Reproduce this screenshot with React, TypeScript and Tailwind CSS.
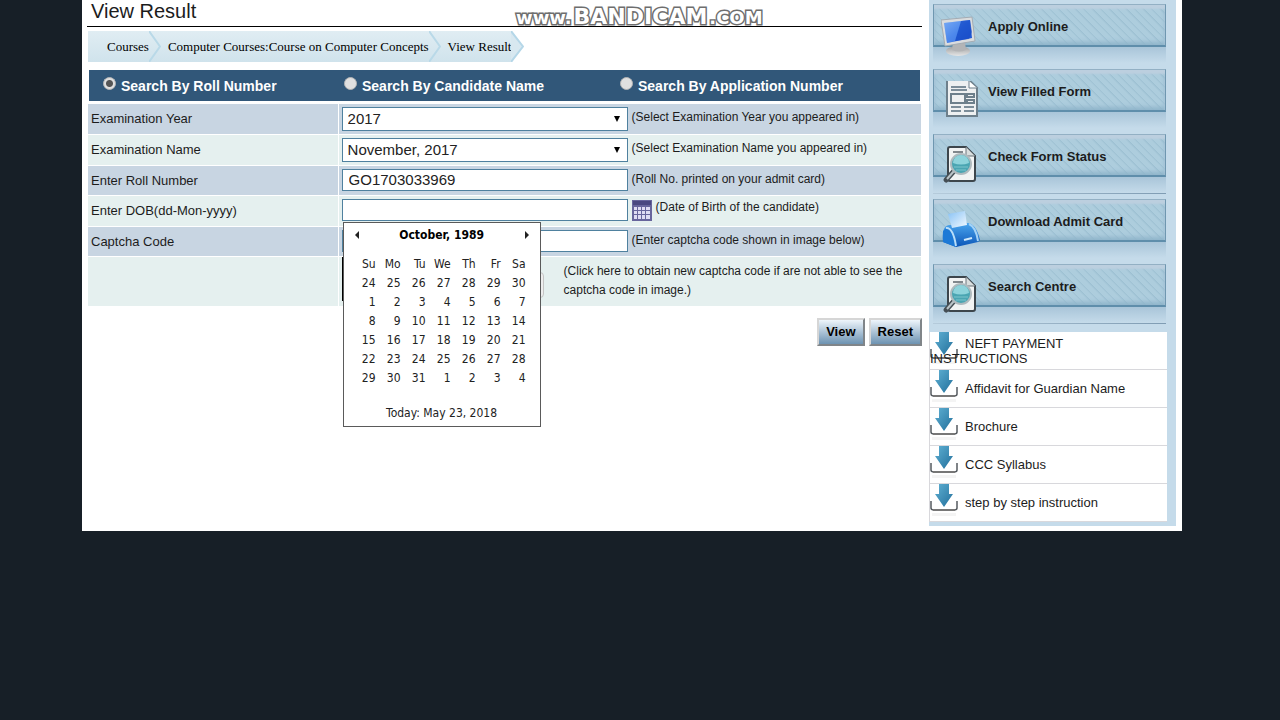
import { useState } from "react";
import type { ReactNode } from "react";

const DAYS = ["Su", "Mo", "Tu", "We", "Th", "Fr", "Sa"];

const WEEKS = [
  [24, 25, 26, 27, 28, 29, 30],
  [1, 2, 3, 4, 5, 6, 7],
  [8, 9, 10, 11, 12, 13, 14],
  [15, 16, 17, 18, 19, 20, 21],
  [22, 23, 24, 25, 26, 27, 28],
  [29, 30, 31, 1, 2, 3, 4],
];

const MODES = [
  "Search By Roll Number",
  "Search By Candidate Name",
  "Search By Application Number",
];

const DOWNLOADS = [
  "NEFT PAYMENT INSTRUCTIONS",
  "Affidavit for Guardian Name",
  "Brochure",
  "CCC Syllabus",
  "step by step instruction",
];

const fieldStyle =
  "w-[286px] shrink-0 border border-[#4f819f] bg-white text-[15px] text-[#222]";

const buttonStyle =
  "h-7 border-2 border-b-[#808589] border-l-[#d6d6d6] border-r-[#808589] border-t-[#d6d6d6] bg-linear-to-b from-[#eef5fb] to-[#6d93b2] px-[7px]";

const monitorIcon = (
  <svg viewBox="0 0 40 42" className="h-[42px] w-10">
    <defs>
      <linearGradient id="screen" x1="0" y1="0" x2="1" y2="1">
        <stop offset="0" stopColor="#6ea4f4" />
        <stop offset="0.5" stopColor="#2c6ee6" />
        <stop offset="1" stopColor="#1b50cf" />
      </linearGradient>
      <linearGradient id="stand" x1="0" y1="0" x2="0" y2="1">
        <stop offset="0" stopColor="#9b9c9e" />
        <stop offset="1" stopColor="#e6e6e6" />
      </linearGradient>
    </defs>
    <ellipse cx="17" cy="35" rx="12" ry="5" fill="url(#stand)" />
    <path d="M12 27 L24 26 L25 34 Q18 37 11 34Z" fill="#b3b4b6" />
    <path d="M0 4 L31 1 L34 25 L4 30Z" fill="#dadcde" stroke="#a4acb3" />
    <path d="M3 7 L29 4 L31 22 L6 27Z" fill="url(#screen)" />
    <path d="M20 5 L29 4 L31 16 L28 23 L14 25Z" fill="#1747c2" opacity="0.6" />
    <path d="M3 7 L20 5 L14 25 L6 27Z" fill="#8ab8f7" opacity="0.35" />
  </svg>
);

const formIcon = (
  <svg viewBox="0 0 40 42" className="h-[42px] w-10" fill="none">
    <path
      d="M6 -1 H28 L36 7 V35 H6Z"
      fill="#eef0f1"
      stroke="#6d7f8b"
      strokeWidth="2"
    />
    <path d="M28 0 V7 H36" fill="#fff" stroke="#6d7f8b" />
    <path
      d="M10 6 H25 M10 9 H26 M10 26 H20 M10 30 H20 M23 26 H33 M23 30 H33"
      stroke="#7c8d99"
      strokeWidth="2"
    />
    <path
      d="M10 13 H24 V22 H10Z M26 13 H33 V16 H26Z M26 19 H33 V22 H26Z"
      stroke="#6d7f8b"
      strokeWidth="2"
    />
  </svg>
);

const searchIcon = (
  <svg viewBox="0 0 40 42" className="h-[42px] w-10" fill="none">
    <path
      d="M9 1 H25 L34 10 V33 Q34 35 32 35 H9 Q7 35 7 33 V3 Q7 1 9 1Z"
      fill="#f1f3f3"
      stroke="#3d464c"
      strokeWidth="2"
    />
    <path d="M25 1 V10 H34" fill="#d9dede" stroke="#6a747a" />
    <path d="M12 6 H22" stroke="#5b656b" strokeWidth="1.5" />
    <path
      d="M13 25 L5 34"
      stroke="#454e54"
      strokeWidth="5"
      strokeLinecap="round"
    />
    <path d="M13 25 L6 33" stroke="#b9c3c7" strokeWidth="2" />
    <circle
      cx="20"
      cy="18"
      r="10"
      fill="#4aa5b2"
      stroke="#aebabe"
      strokeWidth="2"
    />
    <path d="M12 17 A8 8 0 0 1 28 17 Q20 20 12 17Z" fill="#8ed3db" />
    <path d="M13 21 H27 M15 24 H25" stroke="#7cc5cd" strokeWidth="1" />
  </svg>
);

const printerIcon = (
  <svg viewBox="0 0 40 42" className="h-[42px] w-10">
    <defs>
      <linearGradient id="printer" x1="0" y1="0" x2="0" y2="1">
        <stop offset="0" stopColor="#4ba6ee" />
        <stop offset="1" stopColor="#0c56b8" />
      </linearGradient>
      <linearGradient id="paper" x1="0" y1="0" x2="1" y2="1">
        <stop offset="0" stopColor="#86c1f5" />
        <stop offset="1" stopColor="#f4faff" />
      </linearGradient>
    </defs>
    <path
      d="M3 18 Q5 14 9 14 L26 12 Q35 12 39 29 L37 31 L15 36 L2 31 Q1 23 3 18Z"
      fill="url(#printer)"
    />
    <path d="M2 20 Q9 14 13 23 L15 36 L2 31Z" fill="#1d79d6" />
    <path d="M5 17 Q12 16 15 35" fill="none" stroke="#b9def9" strokeWidth="2" />
    <path d="M28 13 Q35 16 37 30" fill="none" stroke="#a5d3f7" strokeWidth="2" />
    <path d="M7 3 L24 0 L26 14 L11 17Z" fill="url(#paper)" />
    <path d="M23 29 L31 27" stroke="#cfe8fb" strokeWidth="2" />
  </svg>
);

const SIDE_LINKS = [
  { label: "Apply Online", icon: monitorIcon, line: false },
  { label: "View Filled Form", icon: formIcon, line: false },
  { label: "Check Form Status", icon: searchIcon, line: true },
  { label: "Download Admit Card", icon: printerIcon, line: false },
  { label: "Search Centre", icon: searchIcon, line: true },
];

function DownloadIcon() {
  return (
    <svg viewBox="0 0 29 34" className="absolute left-0 top-0 h-[34px] w-[29px]">
      <defs>
        <linearGradient id="arrow" x1="0" y1="0" x2="1" y2="1">
          <stop offset="0" stopColor="#5fb0d3" />
          <stop offset="1" stopColor="#226f9b" />
        </linearGradient>
      </defs>
      <path d="M2 29 H26 V32 H2Z" fill="#f4f4f4" />
      <path
        d="M1 17 V24 Q1 26 4 26 H24 Q27 26 27 24 V17"
        fill="none"
        stroke="#555b60"
        strokeWidth="1.5"
      />
      <path d="M3 26 H25" stroke="#777" strokeWidth="2" />
      <path d="M9 0 H19 V10 H23 L14 23 L5 10 H9Z" fill="url(#arrow)" />
    </svg>
  );
}

function Chevron() {
  return (
    <svg viewBox="0 0 12 31" className="h-[31px] w-3" fill="none">
      <path d="M0 0 L11 15.5 L0 31" stroke="#b9d9e8" strokeWidth="2" />
    </svg>
  );
}

function Row({
  label,
  htmlFor,
  dark,
  className,
  children,
}: {
  label: string;
  htmlFor?: string;
  dark?: boolean;
  className: string;
  children: ReactNode;
}) {
  const bg = dark ? "bg-[#c8d5e2]" : "bg-[#e5f0ef]";
  return (
    <div className={`grid grid-cols-[3fr_7fr] gap-px ${className}`}>
      <div className={`flex items-center px-[3px] ${bg}`}>
        <label htmlFor={htmlFor} className="text-[13px] leading-4">
          {label}
        </label>
      </div>
      <div className={`flex items-start gap-1 px-[3px] pt-[3px] ${bg}`}>
        {children}
      </div>
    </div>
  );
}

function Hint({ children }: { children: ReactNode }) {
  return <span className="text-xs leading-5">{children}</span>;
}

function Select({ id, value }: { id: string; value: string }) {
  return (
    <div className="relative">
      <select
        id={id}
        defaultValue={value}
        className={`${fieldStyle} h-6 appearance-none px-[5px] leading-5`}
      >
        <option>{value}</option>
      </select>
      <svg
        viewBox="0 0 6 6"
        className="pointer-events-none absolute right-2 top-[9px] h-[6px] w-[6px]"
      >
        <path d="M0 0 H6 L3 6Z" fill="#000" />
      </svg>
    </div>
  );
}

function Calendar() {
  return (
    <div className="absolute left-px top-[23px] z-10 w-[198px] border border-[#5a5a5a] bg-white pb-1 font-['DejaVu_Sans_Condensed','Noto_Sans',sans-serif] text-xs text-[#222]">
      <div className="flex h-6 items-center justify-between px-[11px]">
        <button type="button" aria-label="Previous month">
          <svg viewBox="0 0 4 8" className="h-2 w-1">
            <path d="M4 0 V8 L0 4Z" fill="#222" />
          </svg>
        </button>
        <b className="text-black">October, 1989</b>
        <button type="button" aria-label="Next month">
          <svg viewBox="0 0 4 8" className="h-2 w-1">
            <path d="M0 0 V8 L4 4Z" fill="#222" />
          </svg>
        </button>
      </div>
      <table className="ml-[7px] mt-2 table-fixed border-collapse text-right leading-[19px]">
        <thead>
          <tr>
            {DAYS.map((day) => (
              <th key={day} className="w-[25px] p-0 text-right font-normal">
                {day}
              </th>
            ))}
          </tr>
        </thead>
        <tbody>
          {WEEKS.map((week, i) => (
            <tr key={i}>
              {week.map((day) => (
                <td key={day} className="w-[25px] p-0">
                  {day}
                </td>
              ))}
            </tr>
          ))}
        </tbody>
      </table>
      <div className="mt-4 text-center leading-[18px]">Today: May 23, 2018</div>
    </div>
  );
}

function CalendarIcon() {
  return (
    <svg viewBox="0 0 20 21" className="h-[21px] w-5">
      <path d="M0 0 H20 V21 H0Z" fill="#67659c" />
      <path d="M1 1 H19 V5 H1Z" fill="#494780" />
      <path
        d="M2 7h3v3H2z M6 7h3v3H6z M10 7h3v3h-3z M14 7h4v3h-4z M2 11h3v3H2z M6 11h3v3H6z M10 11h3v3h-3z M14 11h4v3h-4z M2 15h3v4H2z M6 15h3v4H6z M10 15h3v4h-3z M14 15h4v4h-4z"
        fill="#dedcf3"
      />
    </svg>
  );
}

function Sidebar() {
  return (
    <aside className="w-[247px] shrink-0 bg-[#c5dbea] py-1">
      <nav className="pl-1 pr-[10px]">
        {SIDE_LINKS.map((item) => (
          <a key={item.label} href="#" className="relative block h-[65px]">
            <div className="flex h-[43px] items-center border-b-2 border-l border-r border-t border-b-[#5f8eab] border-l-[#6f97b0] border-r-[#6f97b0] border-t-[#93b0c4] bg-[repeating-linear-gradient(45deg,#adcddd_0px,#adcddd_4px,#9dc0d2_6px)] pl-[54px] pt-[3px] shadow-[inset_0_4px_2px_#bccfdf,inset_0_-3px_4px_#8fb4ca]">
              <span className="text-[13px] font-bold leading-4">
                {item.label}
              </span>
            </div>
            <div className="h-4 bg-linear-to-b from-[#a9c5d9] to-[#c5dbea]"></div>
            {item.line && (
              <div className="h-px bg-linear-to-r from-[#b5cbdb] to-[#7f9cb3]"></div>
            )}
            <span className="absolute left-2 top-3">{item.icon}</span>
          </a>
        ))}
      </nav>
      {/* Downloads */}
      <ul className="mr-[9px] mt-[3px] border-l border-[#d8d8dc] bg-white">
        {DOWNLOADS.map((name) => (
          <li
            key={name}
            className="relative flex h-[38px] items-center border-b border-[#d8d8dc]"
          >
            <DownloadIcon />
            <a
              href="#"
              className="relative max-w-[220px] indent-[35px] text-[13px] leading-[15px]"
            >
              {name}
            </a>
          </li>
        ))}
      </ul>
    </aside>
  );
}

export default function App() {
  const [mode, setMode] = useState(MODES[0]);
  const [dob, setDob] = useState("");

  return (
    <div className="min-h-screen bg-[#171f27] pl-[82px] pr-[98px] font-['Liberation_Sans',Arial,sans-serif] text-[#1c1c1c]">
      <div className="relative flex items-start gap-[7px] bg-white pb-[5px] pl-[5px] pr-[6px]">
        <main className="min-w-0 flex-1">
          <h1 className="border-b border-black pb-1 pl-1 text-xl leading-[22px]">
            View Result
          </h1>

          <nav className="ml-px mt-1 font-['Liberation_Serif',serif] text-[13px] text-black">
            <ol className="flex h-[31px]">
              <li className="flex items-center bg-linear-to-b from-[#e0edf3] to-[#d0e3ec] pl-[19px]">
                <a href="#">Courses</a>
                <Chevron />
              </li>
              <li className="flex items-center bg-linear-to-b from-[#e0edf3] to-[#d0e3ec] pl-[7px]">
                <a href="#">Computer Courses:Course on Computer Concepts</a>
                <Chevron />
              </li>
              <li className="flex items-center bg-linear-to-b from-[#e0edf3] to-[#d0e3ec] pl-[7px]">
                <a href="#">View Result</a>
              </li>
              <li>
                <svg viewBox="0 0 13 31" className="h-[31px] w-[13px]">
                  <path d="M0 0 L12 15.5 L0 31Z" fill="#d8e8f0" />
                  <path
                    d="M0 0 L12 15.5 L0 31"
                    fill="none"
                    stroke="#b5d7e8"
                    strokeWidth="2"
                  />
                </svg>
              </li>
            </ol>
          </nav>

          <form onSubmit={(e) => e.preventDefault()}>
            <div className="mx-[2px] mt-2 grid h-[31px] grid-cols-[241px_276px_1fr] bg-[#315779] pl-[14px] text-sm font-bold text-white">
              {MODES.map((item) => (
                <label key={item} className="flex items-center gap-[5px]">
                  <input
                    type="radio"
                    name="mode"
                    checked={mode === item}
                    onChange={() => setMode(item)}
                    className="mb-1 h-[13px] w-[13px] appearance-none rounded-full border border-[#b5b5b5] bg-[#e0e0e0] checked:bg-[radial-gradient(circle,#555_0px,#555_3px,#e0e0e0_4px)]"
                  />
                  <span>{item}</span>
                </label>
              ))}
            </div>

            <div className="ml-px mr-px mt-[3px] flex flex-col gap-px">
              <Row label="Examination Year" htmlFor="year" dark className="h-[30px]">
                <Select id="year" value="2017" />
                <Hint>(Select Examination Year you appeared in)</Hint>
              </Row>
              <Row label="Examination Name" htmlFor="exam" className="h-[30px]">
                <Select id="exam" value="November, 2017" />
                <Hint>(Select Examination Name you appeared in)</Hint>
              </Row>
              <Row label="Enter Roll Number" htmlFor="roll" dark className="h-[29px]">
                <input
                  id="roll"
                  defaultValue="GO1703033969"
                  className={`${fieldStyle} h-[22px] px-[6px]`}
                />
                <Hint>(Roll No. printed on your admit card)</Hint>
              </Row>
              <Row label="Enter DOB(dd-Mon-yyyy)" htmlFor="dob" className="h-[30px]">
                <div className="relative">
                  <input
                    id="dob"
                    value={dob}
                    onChange={(e) => setDob(e.target.value)}
                    className={`${fieldStyle} block h-[22px] px-[6px]`}
                  />
                  <Calendar />
                </div>
                <button type="button" aria-label="Pick a date" className="mt-px">
                  <CalendarIcon />
                </button>
                <span className="text-xs leading-4">
                  (Date of Birth of the candidate)
                </span>
              </Row>
              <Row label="Captcha Code" htmlFor="captcha" dark className="h-[29px]">
                <input
                  id="captcha"
                  className={`${fieldStyle} h-[22px] px-[6px]`}
                />
                <Hint>(Enter captcha code shown in image below)</Hint>
              </Row>
              <div className="grid h-[49px] grid-cols-[3fr_7fr] gap-px">
                <div className="bg-[#e5f0ef]"></div>
                <div className="flex items-start bg-[#e5f0ef] pl-[3px]">
                  <div className="h-11 w-40 shrink-0 bg-black"></div>
                  <button
                    type="button"
                    aria-label="New captcha code"
                    className="mt-[15px] h-[26px] w-[42px] shrink-0 rounded border border-[#c4c4c4] bg-[#eeeeee]"
                  ></button>
                  <p className="ml-5 mt-[5px] max-w-[345px] text-xs leading-[19px]">
                    (Click here to obtain new captcha code if are not able to see
                    the captcha code in image.)
                  </p>
                </div>
              </div>
            </div>

            <div className="mt-3 flex justify-end gap-1 text-[13px] font-bold text-black">
              <button type="submit" className={buttonStyle}>
                View
              </button>
              <button type="reset" className={buttonStyle}>
                Reset
              </button>
            </div>
          </form>
        </main>

        <Sidebar />

        {/* Recorder watermark */}
        <div className="pointer-events-none absolute left-[434px] top-[5px] flex items-baseline gap-[2px] font-['DejaVu_Sans',sans-serif] font-bold leading-6 text-white [-webkit-text-stroke:3px_#6e6e6e] [paint-order:stroke_fill]">
          <span className="text-lg leading-6">www.</span>
          <span className="text-[22px]">BANDICAM</span>
          <span className="text-lg leading-6">.COM</span>
        </div>
      </div>
    </div>
  );
}
